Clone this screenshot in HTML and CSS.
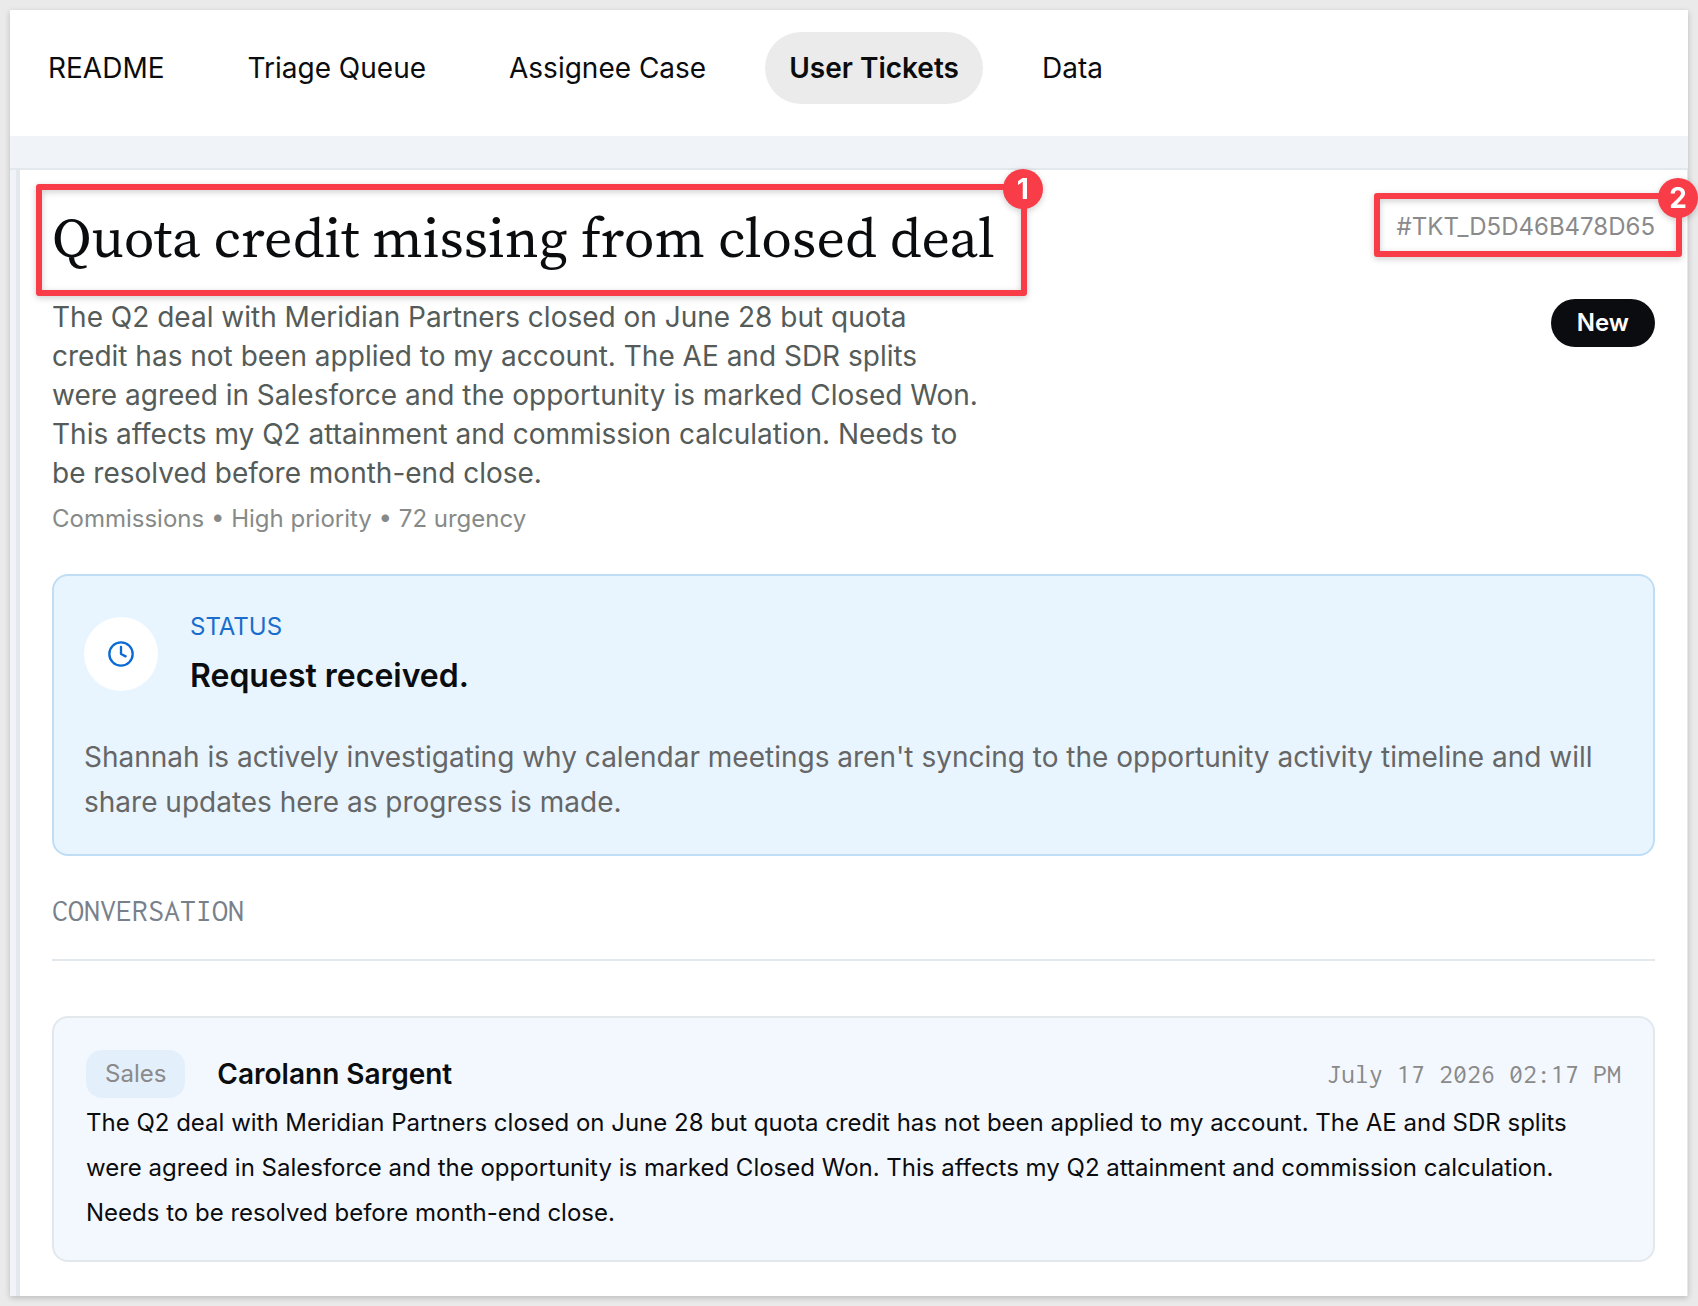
FILE: index.html
```html
<!DOCTYPE html>
<html lang="en">
<head>
<meta charset="utf-8">
<meta name="viewport" content="width=device-width, initial-scale=1">
<title>User Tickets</title>
<link rel="stylesheet" href="styles.css">
</head>
<body>
<div class="window">
  <nav class="tabs">
    <a class="tab" href="#readme">README</a>
    <a class="tab" href="#triage">Triage Queue</a>
    <a class="tab" href="#assignee">Assignee Case</a>
    <a class="tab tab-active" href="#tickets" aria-current="page">User Tickets</a>
    <a class="tab" href="#data">Data</a>
  </nav>
  <div class="band"></div>
  <main class="ticket">
    <header class="ticket-head">
      <div class="ticket-main">
        <h1 class="title">Quota credit missing from closed deal<span class="callout callout-title"><span class="callout-num">1</span></span></h1>
        <p class="summary">The Q2 deal with Meridian Partners closed on June 28 but quota credit has not been applied to my account. The AE and SDR splits were agreed in Salesforce and the opportunity is marked Closed Won. This affects my Q2 attainment and commission calculation. Needs to be resolved before month-end close.</p>
        <p class="meta">Commissions • High priority • 72 urgency</p>
      </div>
      <div class="ticket-side">
        <span class="ticket-id">#TKT_D5D46B478D65<span class="callout callout-id"><span class="callout-num">2</span></span></span>
        <span class="state">New</span>
      </div>
    </header>

    <section class="status">
      <div class="status-head">
        <span class="status-icon">
          <svg width="28" height="28" viewBox="0 0 24 24" fill="none" stroke="currentColor" stroke-width="2" stroke-linecap="round" stroke-linejoin="round" aria-hidden="true"><circle cx="12" cy="12" r="10"/><path d="M12 6v6l4 2"/></svg>
        </span>
        <div>
          <p class="status-label">STATUS</p>
          <h2 class="status-title">Request received.</h2>
        </div>
      </div>
      <p class="status-text">Shannah is actively investigating why calendar meetings aren't syncing to the opportunity activity timeline and will share updates here as progress is made.</p>
    </section>

    <h2 class="section-title">CONVERSATION</h2>

    <article class="message">
      <header class="message-head">
        <span class="chip">Sales</span>
        <h3 class="author">Carolann Sargent</h3>
        <time class="date" datetime="2026-07-17T14:17">July 17 2026 02:17 PM</time>
      </header>
      <p class="message-text">The Q2 deal with Meridian Partners closed on June 28 but quota credit has not been applied to my account. The AE and SDR splits were agreed in Salesforce and the opportunity is marked Closed Won. This affects my Q2 attainment and commission calculation. Needs to be resolved before month-end close.</p>
    </article>
  </main>
</div>
</body>
</html>
```
FILE: styles.css
```css
* { box-sizing: border-box; }

body {
  margin: 0;
  padding: 10px;
  min-height: 100vh;
  display: flex;
  background: #eaeaea;
  color: #0b0c0e;
  font-family: Inter, "Liberation Sans", sans-serif;
  font-size: 28px;
}

h1, h2, h3, p { margin: 0; }

.window {
  flex: 1;
  min-width: 0;
  display: flex;
  flex-direction: column;
  background: #fff;
  box-shadow: 0 2px 6px rgba(0, 0, 0, 0.2);
}

.tabs {
  display: flex;
  gap: 35px;
  padding: 22px 14px 32px;
}

.tab {
  padding: 0 24px;
  border-radius: 36px;
  line-height: 72px;
  color: inherit;
  text-decoration: none;
}

.tab-active {
  background: #ebebeb;
  font-weight: 600;
}

.band {
  height: 34px;
  background: #f0f4f8;
  border-bottom: 2px solid #e3e8ed;
}

.ticket {
  flex: 1;
  margin-left: 6px;
  padding: 32px 32px 34px;
  border-left: 4px solid #e3e8ed;
  border-right: 1px solid #e3e8ed;
  box-shadow: -6px 0 0 #f0f4f8;
}

.ticket-head {
  display: flex;
  justify-content: space-between;
  gap: 32px;
}

.title {
  position: relative;
  width: fit-content;
  margin-bottom: 24px;
  font-family: "Source Serif 4", "Source Serif Pro", "Liberation Serif", serif;
  font-size: 56px;
  font-weight: 400;
  line-height: 72px;
}

.summary {
  max-width: 930px;
  line-height: 39px;
  color: #545b58;
}

.meta {
  margin-top: 8px;
  font-size: 24px;
  line-height: 36px;
  color: #868a88;
}

.ticket-side {
  display: flex;
  flex-direction: column;
  align-items: flex-end;
  gap: 54px;
  padding-top: 7px;
}

.ticket-id {
  position: relative;
  font-size: 24px;
  line-height: 36px;
  color: #8a8a8a;
}

.state {
  padding: 0 26px;
  border-radius: 24px;
  background: #0b0c10;
  color: #fff;
  font-size: 24px;
  font-weight: 600;
  line-height: 48px;
}

/* Numbered outlines drawn over the page content */
.callout {
  position: absolute;
  border: 6px solid #f83c48;
  border-radius: 3px;
  filter: drop-shadow(0 2px 3px rgba(0, 0, 0, 0.2));
}

.callout-title { inset: -18px -32px -22px -16px; }

.callout-id { inset: -16px -27px -12px -23px; }

.callout-num {
  position: absolute;
  top: -21px;
  right: -22px;
  width: 40px;
  border-radius: 50%;
  background: #f83c48;
  color: #fff;
  font-family: Inter, "Liberation Sans", sans-serif;
  font-size: 28px;
  font-weight: 700;
  line-height: 40px;
  text-align: center;
}

.status {
  margin-top: 37px;
  padding: 32px 30px 29px;
  border: 2px solid #bfdef5;
  border-radius: 16px;
  background: #e8f5ff;
}

.status-head {
  display: flex;
  align-items: center;
  gap: 32px;
  margin-bottom: 35px;
}

.status-icon {
  display: flex;
  align-items: center;
  justify-content: center;
  width: 74px;
  height: 74px;
  border-radius: 50%;
  background: #fff;
  color: #0b6bd3;
}

.status-label {
  font-size: 24px;
  line-height: 38px;
  color: #1a6dcc;
}

.status-title {
  margin-top: 6px;
  font-size: 32px;
  font-weight: 600;
  line-height: 48px;
}

.status-text {
  line-height: 45px;
  color: #666;
}

.section-title {
  margin: 31px 0 55px;
  padding-bottom: 24px;
  border-bottom: 2px solid #e3e8ed;
  color: #78818b;
  font-family: Inconsolata, "Liberation Mono", monospace;
  font-size: 32px;
  font-weight: 400;
  line-height: 48px;
}

.message {
  padding: 32px 32px 25px;
  border: 2px solid #e3e8ed;
  border-radius: 16px;
  background: #f3f8ff;
}

.message-head {
  display: flex;
  align-items: center;
  gap: 32px;
  margin-bottom: 2px;
}

.chip {
  padding: 0 19px;
  border-radius: 16px;
  background: #e3effb;
  color: #8a8a8a;
  font-size: 24px;
  line-height: 48px;
}

.author {
  font-size: 28px;
  font-weight: 600;
  line-height: 48px;
}

.date {
  margin-left: auto;
  color: #8a8a8a;
  font-family: Inconsolata, "Liberation Mono", monospace;
  font-size: 28px;
  line-height: 48px;
}

.message-text {
  font-size: 24px;
  line-height: 45px;
}
```
